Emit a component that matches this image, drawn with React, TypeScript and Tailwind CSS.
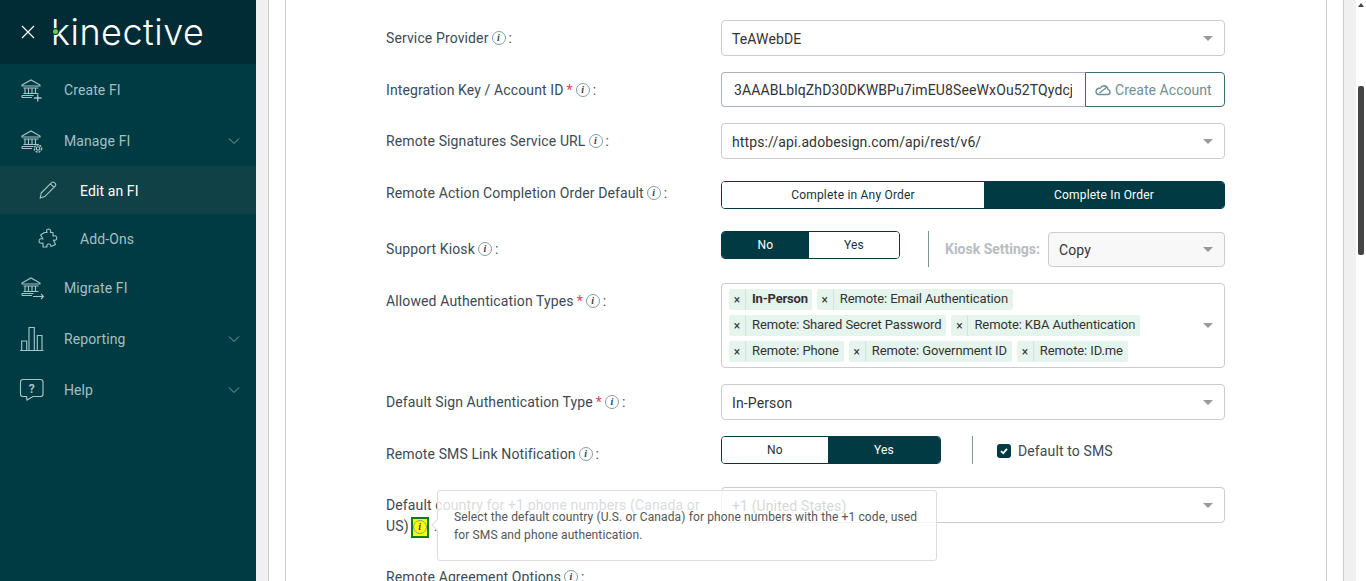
import React from "react";

const ink = "#a6c4c8";

function Bank({ children }: { children?: React.ReactNode }) {
  return (
    <svg width="26" height="26" viewBox="0 0 26 26" fill="none" stroke={ink} strokeWidth="1.15" className="shrink-0">
      <path d="M3 8 L12 3 L21 8 L21 9 L3 9 Z" />
      <path d="M4.5 11 H19.5 M6 11 V16 M9.5 11 V16 M13 11 V16 M16.5 11 V16 M4.5 16.5 H19.5" />
      <path d="M3 18.5 H14.5 M3 20.5 H13 M3 18.5 V20.5" />
      {children}
    </svg>
  );
}

const CreateIcon = () => (
  <Bank>
    <path d="M18.7 17.5 V24.5 M15 21 H22.5" strokeWidth="1.3" />
  </Bank>
);
const ManageIcon = () => (
  <Bank>
    <circle cx="19" cy="20.5" r="1.7" strokeWidth="1.1" />
    <circle cx="19" cy="20.5" r="3.6" strokeWidth="1.5" strokeDasharray="2 1" />
  </Bank>
);
const MigrateIcon = () => (
  <Bank>
    <path d="M14 21.5 H24.5 M22 19 L24.5 21.5 L22 24" strokeWidth="1.1" />
  </Bank>
);

const ChartIcon = () => (
  <svg width="26" height="26" viewBox="0 0 26 26" fill="none" stroke={ink} strokeWidth="1.15" className="shrink-0">
    <path d="M1 24.5 H24.5 M2.7 24 V15 H7.7 V24 M10 24 V1.5 H15.3 V24 M18.3 24 V9.5 H23 V24" />
  </svg>
);

const HelpIcon = () => (
  <svg width="26" height="26" viewBox="0 0 26 26" fill="none" stroke={ink} strokeWidth="1.15" className="shrink-0">
    <path d="M4 2.5 H21.5 Q24 2.5 24 5 V17 Q24 19.5 21.5 19.5 H14 L8 23 L7.5 19.5 H4 Q1.5 19.5 1.5 17 V5 Q1.5 2.5 4 2.5 Z" />
    <text x="12.7" y="15.5" textAnchor="middle" fill={ink} stroke="none" fontSize="12" fontWeight="700" fontFamily="Roboto, sans-serif">?</text>
  </svg>
);

const PencilIcon = () => (
  <svg width="20" height="20" viewBox="0 0 20 20" fill="none" stroke={ink} strokeWidth="1.1" className="shrink-0">
    <path d="M3.2 13 L13.8 2.4 Q15 1.4 16.4 2.6 L17.2 3.4 Q18.4 4.8 17.4 6 L6.8 16.6 L2.2 18 Z M12.4 3.8 L16 7.4" />
  </svg>
);

const PuzzleIcon = () => (
  <svg width="20" height="20" viewBox="0 0 20 20" fill="none" stroke={ink} strokeWidth="1.1" className="shrink-0">
    <path d="M6.5 4.5 H9 Q7.6 1.2 10.6 1 Q13.4 1.2 12.4 4.5 H15 V8 Q18.6 7 18.8 10 Q18.6 13 15.4 12 L17.5 16.5 L13 18.5 Q12.6 15.6 10.4 16 Q8.4 16.4 9 19 H5 V15 Q1.2 16 1 13 Q1.2 10 5 11 L2.6 7 Z" strokeLinejoin="round" />
  </svg>
);

const Chevron = () => (
  <svg width="12" height="8" viewBox="0 0 12 8" fill="none" stroke="#7fa3a8" strokeWidth="1" className="ml-auto mr-[16px] shrink-0">
    <path d="M1 1.5 L6 6.5 L11 1.5" />
  </svg>
);

function NavItem({ icon, label, h, chevron, sub, active }: { icon: React.ReactNode; label: string; h: string; chevron?: boolean; sub?: boolean; active?: boolean }) {
  return (
    <div className={`flex items-center ${h} ${sub ? "pl-[38px]" : "pl-[19px]"} ${active ? "bg-[#0f4147] text-white" : "text-[#a2c0c4]"}`}>
      <span className={`flex ${sub ? "w-[42px]" : "w-[45px]"}`}>{icon}</span>
      <span className="pt-[2px] text-[14px] tracking-[0.1px]">{label}</span>
      {chevron && <Chevron />}
    </div>
  );
}

function Info({ mark }: { mark?: boolean }) {
  const circle = (
    <span className="inline-flex h-[14px] w-[14px] items-center justify-center rounded-full border border-[#7f9ea6] align-[2px] font-['Liberation_Serif',serif] text-[10px] font-bold italic leading-none text-[#2d4650]">
      i
    </span>
  );
  if (mark) {
    return <span className="mx-[2px] inline-flex h-[21px] w-[18px] items-center justify-center border-2 border-[#0b7d12] bg-[#ffff00] align-middle">{circle}</span>;
  }
  return <span className="ml-[3px]">{circle}</span>;
}

function Caret() {
  return <span className="ml-auto h-0 w-0 border-x-[5px] border-t-[5px] border-x-transparent border-t-[#999999]" />;
}

function Select({ value, className = "h-[36px]" }: { value: string; className?: string }) {
  return (
    <div className={`flex items-center rounded-[4px] border border-[#cccccc] pl-[10px] pr-[11px] text-[14px] tracking-[0.12px] text-[#333333] ${className}`}>
      <span className="pt-[2px]">{value}</span>
      <Caret />
    </div>
  );
}

function Seg({ left, right, leftOn, leftW, className }: { left: string; right: string; leftOn: boolean; leftW: string; className: string }) {
  return (
    <div className={`flex h-[28px] overflow-hidden rounded-[4px] border border-[#013a42] text-[12px] tracking-[0.2px] ${className}`}>
      <div className={`flex items-center justify-center ${leftW} ${leftOn ? "bg-[#013a42] text-white" : "bg-white text-[#17333a]"}`}>{left}</div>
      <div className={`flex flex-1 items-center justify-center ${leftOn ? "bg-white text-[#17333a]" : "bg-[#013a42] text-white"}`}>{right}</div>
    </div>
  );
}

function Tag({ text, bold }: { text: string; bold?: boolean }) {
  return (
    <span className="flex h-[21px] items-center rounded-[2px] bg-[#e6f4ee] text-[13px] text-[#333333]">
      <span className="flex h-full w-[17px] items-center justify-center border-r border-[#cfe4da] text-[12px]">×</span>
      <span className={`pb-[2px] pl-[6px] ${bold ? "pr-[4px] font-bold tracking-[-0.2px]" : "pr-[5px] tracking-[-0.1px]"}`}>{text}</span>
    </span>
  );
}

function Row({ label, required, mt, children, mark, tail }: { label: string; required?: boolean; mt: string; children?: React.ReactNode; mark?: boolean; tail?: React.ReactNode }) {
  return (
    <div className={`relative flex items-start ${mt}`}>
      <div className="w-[335px] shrink-0 pr-[15px] pt-[8px] text-[14px] leading-[21px] tracking-[0.12px] text-[#3c4a55]">
        {label}
        {required && <span className="ml-[3px] text-[#e0455a]">*</span>}
        <Info mark={mark} />
        <span className="ml-[3px]">:</span>
      </div>
      <div className="w-[504px] shrink-0">{children}</div>
      {tail}
    </div>
  );
}

export default function App() {
  return (
    <div className="flex h-[581px] w-full overflow-hidden bg-white font-['Roboto',sans-serif]">
      <aside className="w-[256px] shrink-0 bg-[#003a42]">
        <div className="relative flex h-[64px] items-center bg-[#012c36] pl-[21px]">
          <svg width="14" height="14" viewBox="0 0 14 14" stroke="#ffffff" strokeWidth="1.2" fill="none" className="mr-[16px]">
            <path d="M1 1 L13 13 M13 1 L1 13" />
          </svg>
          <span className="relative font-['Inter',sans-serif] text-[36px] font-light leading-none tracking-[0.5px] text-white">
            kinective
            <span className="absolute left-[2px] top-[15px] h-[5px] w-[5px] rounded-full bg-[#63d13f] ring-1 ring-[#012c36]" />
          </span>
        </div>
        <NavItem icon={<CreateIcon />} label="Create FI" h="h-[51px]" />
        <NavItem icon={<ManageIcon />} label="Manage FI" h="h-[51px]" chevron />
        <NavItem icon={<PencilIcon />} label="Edit an FI" h="h-[48px]" sub active />
        <NavItem icon={<PuzzleIcon />} label="Add-Ons" h="h-[48px]" sub />
        <NavItem icon={<MigrateIcon />} label="Migrate FI" h="h-[51px]" />
        <NavItem icon={<ChartIcon />} label="Reporting" h="h-[51px]" chevron />
        <NavItem icon={<HelpIcon />} label="Help" h="h-[51px]" chevron />
      </aside>

      <main className="h-full flex-1 bg-[#f0f0f0] px-3">
        <div className="h-full border-x border-[#cccccc] bg-white px-4">
          <div className="h-full overflow-hidden border-x border-[#cccccc] pl-[100px]">
            <Row label="Service Provider" mt="mt-[20px]">
              <Select value="TeAWebDE" />
            </Row>
            <Row label="Integration Key / Account ID" required mt="mt-[16px]">
              <div className="flex h-[35px]">
                <div className="flex w-[364px] items-center overflow-hidden rounded-l-[4px] border border-r-0 border-[#a9b5bb] pl-[12px] pr-[13px] text-[14px] tracking-[0.12px] text-[#333333]">
                  <span className="overflow-hidden whitespace-nowrap pt-[1px]">3AAABLblqZhD30DKWBPu7imEU8SeeWxOu52TQydcj xQ2</span>
                </div>
                <div className="flex flex-1 items-center gap-[4px] rounded-r-[4px] border border-[#3b6d74] pl-[9px] text-[14px] tracking-[0.05px] text-[#6f9095]">
                  <svg width="16" height="12" viewBox="0 0 16 12" fill="none" stroke="#6f9095" strokeWidth="1.4">
                    <path d="M4 10.5 H12.5 Q15 10.5 15 8 Q15 6 13 5.6 Q12.5 2 9 1.8 Q6.5 1.8 5.5 4 Q1.2 4 1 7.6 Q1 10.5 4 10.5 Z" />
                    <path d="M4.5 9 L12 3" />
                  </svg>
                  <span className="pt-[1px]">Create Account</span>
                </div>
              </div>
            </Row>
            <Row label="Remote Signatures Service URL" mt="mt-[16px]">
              <Select value="https://api.adobesign.com/api/rest/v6/" />
            </Row>
            <Row label="Remote Action Completion Order Default" mt="mt-[16px]">
              <div className="pt-[6px]">
                <Seg left="Complete in Any Order" right="Complete In Order" leftOn={false} leftW="w-[262px]" className="w-[504px]" />
              </div>
            </Row>
            <Row label="Support Kiosk" mt="mt-[22px]">
              <div className="flex items-start">
                <Seg left="No" right="Yes" leftOn leftW="w-[87px]" className="w-[179px]" />
                <div className="ml-[28px] h-[36px] w-px bg-[#7f959c]" />
                <span className="ml-[16px] mt-[8px] text-[14px] font-bold text-[#b7bdc3]">Kiosk Settings:</span>
                <Select value="Copy" className="ml-[8px] mt-px h-[35px] flex-1 bg-[#f8f8f8]" />
              </div>
            </Row>
            <Row label="Allowed Authentication Types" required mt="mt-[16px]">
              <div className="flex h-[85px] items-center rounded-[4px] border border-[#cccccc] pl-[7px] pr-[11px]">
                <div className="flex w-[470px] flex-wrap gap-x-[5px] gap-y-[5px]">
                  <Tag text="In-Person" bold />
                  <Tag text="Remote: Email Authentication" />
                  <Tag text="Remote: Shared Secret Password" />
                  <Tag text="Remote: KBA Authentication" />
                  <Tag text="Remote: Phone" />
                  <Tag text="Remote: Government ID" />
                  <Tag text="Remote: ID.me" />
                </div>
                <Caret />
              </div>
            </Row>
            <Row label="Default Sign Authentication Type" required mt="mt-[16px]">
              <Select value="In-Person" />
            </Row>
            <Row label="Remote SMS Link Notification" mt="mt-[16px]">
              <div className="flex items-start">
                <Seg left="No" right="Yes" leftOn={false} leftW="w-[106px]" className="w-[220px]" />
                <div className="ml-[31px] h-[28px] w-px bg-[#7f959c]" />
                <span className="ml-[24px] mt-[8px] flex h-[14px] w-[14px] items-center justify-center rounded-[3px] bg-[#013a42]">
                  <svg width="10" height="10" viewBox="0 0 10 10" fill="none" stroke="#ffffff" strokeWidth="1.8">
                    <path d="M2 5.2 L4.2 7.2 L8 2.8" />
                  </svg>
                </span>
                <span className="ml-[7px] mt-[5px] text-[14px] tracking-[0.12px] text-[#3c4a55]">Default to SMS</span>
              </div>
            </Row>
            <Row
              label="Default country for +1 phone numbers (Canada or US)"
              mt="mt-[22px]"
              mark
              tail={
                <div className="absolute left-[51px] top-[3px] h-[71px] w-[500px] rounded-[3px] border border-[#dddddd] bg-white/80 pl-[16px] pr-[16px] pt-[17px] text-[12px] leading-[18px] tracking-[0.12px] text-[#555555]">
                  <span className="absolute -left-[5px] top-[30px] h-[8px] w-[8px] rotate-45 border-b border-l border-[#dddddd] bg-white" />
                  Select the default country (U.S. or Canada) for phone numbers with the +1 code, used for SMS and phone authentication.
                </div>
              }
            >
              <Select value="+1 (United States)" />
            </Row>
            <Row label="Remote Agreement Options" mt="mt-[21px]" />
          </div>
        </div>
      </main>

      <div className="relative w-[10px] shrink-0 bg-white">
        <span className="absolute left-[2px] top-[3px] h-0 w-0 border-x-[3px] border-b-[4px] border-x-transparent border-b-[#444444]" />
        <span className="absolute left-[2px] top-[86px] h-[169px] w-[6px] rounded-[2px] bg-[#444444]" />
      </div>
    </div>
  );
}
